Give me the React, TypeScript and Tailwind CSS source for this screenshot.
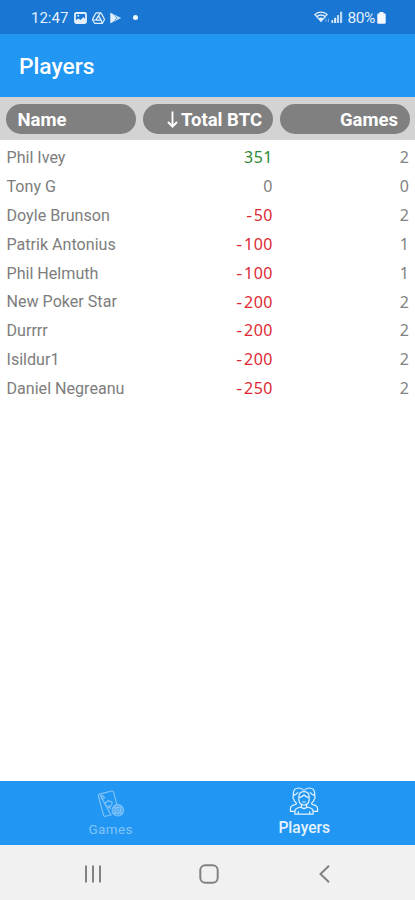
type Player = { name: string; total: number; games: number };

const players: Player[] = [
  { name: 'Phil Ivey', total: 351, games: 2 },
  { name: 'Tony G', total: 0, games: 0 },
  { name: 'Doyle Brunson', total: -50, games: 2 },
  { name: 'Patrik Antonius', total: -100, games: 1 },
  { name: 'Phil Helmuth', total: -100, games: 1 },
  { name: 'New Poker Star', total: -200, games: 2 },
  { name: 'Durrrr', total: -200, games: 2 },
  { name: 'Isildur1', total: -200, games: 2 },
  { name: 'Daniel Negreanu', total: -250, games: 2 },
];

function totalColor(total: number) {
  if (total > 0) return 'text-[#2e8b35]';
  if (total < 0) return 'text-[#dc2a35]';
  return 'text-[#808080]';
}

function StatusBar() {
  return (
    <div className="flex h-[34px] items-center bg-[#1976d2] pl-[31px] pr-[29px] pt-[2px] text-[#e3f0fc]">
      <span className="w-[43px] text-[15px] leading-none">12:47</span>
      <svg width="13" height="12" viewBox="0 0 13 12" className="shrink-0">
        <rect x="1" y="1" width="11" height="10" rx="1.2" fill="none" stroke="currentColor" strokeWidth="1.8" />
        <circle cx="4.2" cy="3.8" r="1" fill="currentColor" />
        <path d="M1.5 10.5V8.3L4.5 6.6l2 1.4L9.5 5l2.5 3v2.5z" fill="currentColor" />
      </svg>
      <svg width="13" height="12" viewBox="0 0 13 12" className="ml-[5px] shrink-0" fill="none" stroke="currentColor" strokeWidth="1.2">
        <path d="M4.8.8h3.4q.8 0 1.3.9l2.6 4.9q.5 1-.1 1.9L10.6 11q-.4.4-1 .4H3.4q-.6 0-1-.4L1 8.5q-.6-.9-.1-1.9l2.6-4.9q.5-.9 1.3-.9z" />
        <path d="M6.5 3.6 9 8.1H4z" strokeLinejoin="round" />
        <path d="M8.5.8 6.5 3.6M.7 8H4M10.3 11.3 9 8.1" />
      </svg>
      <svg width="12" height="12" viewBox="0 0 12 12" className="ml-[5px] shrink-0">
        <path d="M.5.8 11.3 6 .5 11.2z" fill="currentColor" opacity=".85" />
        <path d="M.5.8 6 6 .5 11.2z" fill="currentColor" />
        <path d="m4.5 3.5 2.6 2.5-2.6 2.5" fill="none" stroke="#1976d2" strokeWidth=".5" />
      </svg>
      <span className="ml-[11px] size-[5px] -translate-y-px rounded-full bg-[#edf6ff]" />
      <div className="ml-auto flex items-center">
        <svg width="17" height="13" viewBox="0 0 17 13" className="-translate-y-px" fill="none" stroke="currentColor">
          <path d="M.8 3.4Q7 -1 13.2 3.4L7 10.3z" strokeWidth="1.2" />
          <path d="M3 5.4Q7 2.6 11 5.4" strokeWidth="1.5" />
          <path d="M4.6 7.2Q7 5.6 9.4 7.2L7 10.3z" fill="currentColor" stroke="none" />
          <path d="M12 7.5v3.5M14.5 7.5v3.5" strokeWidth="1" opacity=".45" />
        </svg>
        <svg width="12" height="12" viewBox="0 0 12 12" className="-translate-y-px" fill="currentColor">
          <path d="M.5 9h1.7v3H.5zM3.2 6.8h2V12h-2z" />
          <path d="M6 4h2.1v8H6zM9 .8h2.2V12H9z" opacity=".8" />
        </svg>
        <span className="ml-[4px] translate-y-[0.5px] text-[15.5px] leading-none tracking-[-0.4px]">80%</span>
        <svg width="9" height="12" viewBox="0 0 9 12" className="ml-[2px]" fill="#f3f9ff">
          <path d="M2.5 0h4v1.5H8a.7.7 0 0 1 .7.7v8.6a.9.9 0 0 1-.9.9H1.2a.9.9 0 0 1-.9-.9V2.2A.7.7 0 0 1 1 1.5h1.5z" />
        </svg>
      </div>
    </div>
  );
}

function TableHead() {
  const pill = 'flex h-[30px] w-[130px] shrink-0 items-center rounded-full bg-[#808080] pt-[2px] text-[18.5px] font-bold leading-none text-white';
  return (
    <div className="flex h-[43px] gap-[7px] bg-[#d3d3d3] pl-[6px] pt-[7px]">
      <div className={`${pill} pl-[11.5px]`}>Name</div>
      <div className={`${pill} justify-end pr-[11px]`}>
        <svg width="11" height="17" viewBox="0 0 11 17" className="mr-[3px] -translate-y-px" fill="none" stroke="white" strokeWidth="1.9">
          <path d="M5.5.5v15M1 11l4.5 4.6L10 11" />
        </svg>
        Total BTC
      </div>
      <div className={`${pill} justify-end pr-[12px]`}>Games</div>
    </div>
  );
}

function PlayerRow({ name, total, games }: Player) {
  return (
    <div className="flex h-[28.85px] items-center text-[16px] leading-none">
      <span className="w-[136px] whitespace-nowrap pl-[0.5px] pt-[1.5px] text-[16.1px] text-[#7d7d7d]">{name}</span>
      <span className={`w-[131px] text-right font-['Noto_Sans'] tracking-[0.5px] ${totalColor(total)}`}>
        {total < 0 && <span className="mr-[1.5px] inline-block origin-right scale-x-115">-</span>}
        {Math.abs(total)}
      </span>
      <span className="flex-1 text-right font-['Noto_Sans'] text-[#838383]">{games}</span>
    </div>
  );
}

function CardsIcon() {
  return (
    <svg width="28" height="28" viewBox="0 0 28 28" fill="none" stroke="currentColor" strokeWidth="1.1">
      <path d="M2.5 4.1 14.7 1q1.5-.3 1.9 1.2l3.2 12.2M14 25l-5.6 1.3q-1.5.3-1.9-1.2L1.4 6q-.3-1.5 1.1-1.9z" />
      <path d="M4.3 8.3 5 5.3l2.5 2-1 1.6z" />
      <path d="M8.2 14.5q-.4-2.4 2-2.6.8-2.3 2.6-.5 2.9-.2 2.2 2.4-.6 2.2-2.9 3.9-3-.8-3.9-3.2zM11.5 15l2 4" />
      <circle cx="20.8" cy="20.3" r="5.7" fill="currentColor" fillOpacity=".45" />
      <circle cx="20.8" cy="20.3" r="3.1" />
      <path d="m19.4 18.5 2.8 3.6M16.8 16.3l1.6 1.6M23.2 22.7l1.6 1.6M24.8 16.3l-1.6 1.6M18.4 22.7l-1.6 1.6" />
    </svg>
  );
}

function PeopleIcon() {
  return (
    <svg width="30" height="28" viewBox="0 0 30 28" fill="none" stroke="currentColor" strokeWidth="1.2" strokeLinejoin="round">
      <path d="M14.8 3.5Q12.8 1 9.8 1 4.3 1 4.3 6.8v2.4q-1.2 1.6.4 3 .5 2.5 2.5 3.6v1.4l-3.4 1.2q-2.4.9-2.4 3.3v2.6h4.5" />
      <path d="M15.2 3.5Q17.2 1 20.2 1q5.5 0 5.5 5.8v2.4q1.2 1.6-.4 3-.5 2.5-2.5 3.6v1.4l3.4 1.2q2.4.9 2.4 3.3v2.6h-4.5" />
      <path d="M4.5 8.3q3-.7 4.5-3.1M25.5 8.3q-3-.7-4.5-3.1" />
      <path d="M9.9 10.2q-.3-5.6 5.1-5.6t5.1 5.6v3.2q-.6 4.6-5.1 4.6t-5.1-4.6z" />
      <path d="M10 10.3q3.5-.2 5-2.5 1.5 2.300 5 2.500M13.300 15h3.400" />
      <path d="M12.500 17.500v2.200L8 21.300q-2.100.8-2.100 3v2.900h18.200v-2.900q0-2.200-2.100-3l-4.500-1.600v-2.200M11.800 20q3.200 3 6.400 0M9.300 24.300v2.800M20.700 24.300v2.800" />
    </svg>
  );
}

export default function App() {
  return (
    <div className="flex h-[900px] w-[415px] flex-col overflow-hidden bg-white font-['Roboto',sans-serif]">
      <StatusBar />
      <header className="flex h-[63px] items-center bg-[#2196f3] pl-[19px] pt-[4px] text-[22.8px] font-medium leading-none text-white">
        Players
      </header>
      <TableHead />
      <main className="flex-1 pl-[6px] pr-[6px] pt-[3px]">
        {players.map((player) => (
          <PlayerRow key={player.name} {...player} />
        ))}
      </main>
      <nav className="flex h-[64px] bg-[#2196f3] px-[14px]">
        <div className="flex flex-1 flex-col items-center pt-[9px] text-[#83c4f8]">
          <CardsIcon />
          <span className="mt-[5px] text-[13.5px] leading-none tracking-[0.4px]">Games</span>
        </div>
        <div className="flex flex-1 flex-col items-center pt-[6px] text-[#e4f3ff]">
          <PeopleIcon />
          <span className="mt-[6px] text-[15.6px] font-medium leading-none">Players</span>
        </div>
      </nav>
      <div className="flex h-[55px] items-center bg-[#f1f1f1] pl-[83px] pt-[3px] text-[#828282]">
        <svg width="20" height="20" viewBox="0 0 20 20" fill="none" stroke="currentColor" strokeWidth="2">
          <path d="M3 1.5v17M10 1.5v17M17 1.5v17" />
        </svg>
        <svg width="20" height="20" viewBox="0 0 20 20" className="ml-[96px]" fill="none" stroke="currentColor" strokeWidth="2">
          <rect x="1.3" y="1.3" width="17.4" height="17.4" rx="5" />
        </svg>
        <svg width="14" height="20" viewBox="0 0 14 20" className="ml-[99px]" fill="none" stroke="currentColor" strokeWidth="2">
          <path d="M11 1.7 2.5 10l8.5 8.3" />
        </svg>
      </div>
    </div>
  );
}
